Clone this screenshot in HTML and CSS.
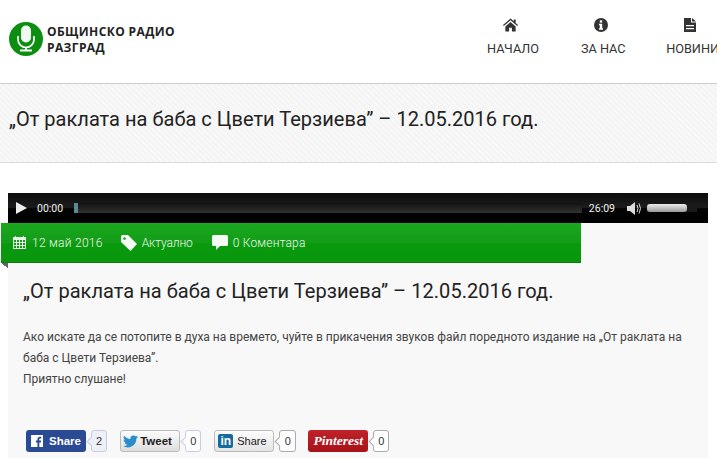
FILE: index.html
```html
<!DOCTYPE html>

<html>
    <head>
        <meta charset="UTF-8">
        <title>Общинско радио Разград</title>

        <link rel="stylesheet" href="styles.css">
    </head>

    <body>
        <header class="site-header">
            <div class="logo">
                <svg class="logo-icon" width="34" height="34" viewBox="0 0 34 34">
                    <circle cx="17" cy="17" r="17" fill="#0c8f10"/>
                    <rect x="12" y="3.500" width="10" height="17" rx="5" fill="#f2f8f2"/>
                    <path d="M9 14v3.500a8 8 0 0 0 16 0V14" fill="none" stroke="#fff" stroke-width="1.700"/>
                    <path d="M17 25.500v2.500M11 28.500h12" fill="none" stroke="#fff" stroke-width="1.800"/>
                </svg>
                <div class="logo-text">ОБЩИНСКО РАДИО<br>РАЗГРАД</div>
            </div>

            <nav class="menu">
                <a class="menu-item menu-home">
                    <svg width="15" height="14" viewBox="0 0 16 14"><path d="M8 0 0 7l.8 1L8 2l7.200 6 .8-1-2.500-2.200V1h-2v2L8 0zM2.500 8.500V14h4v-4h3v4h4V8.500L8 3.800z" fill="#333"/></svg>
                    <span>НАЧАЛО</span>
                </a>
                <a class="menu-item menu-about">
                    <svg width="14" height="14" viewBox="0 0 14 14"><circle cx="7" cy="7" r="7" fill="#333"/><rect x="5.800" y="2.300" width="2.400" height="2.300" fill="#fff"/><path d="M5 5.800h3.200v4.400H9v1.500H5v-1.500h.8V7.300H5z" fill="#fff"/></svg>
                    <span>ЗА НАС</span>
                </a>
                <a class="menu-item menu-news">
                    <svg width="12" height="14" viewBox="0 0 12 14"><path d="M0 0h7v4.500h5V14H0zM8 0l4 3.500H8zM2 7v1.300h8V7zM2 10v1.300h8V10z" fill="#333" fill-rule="evenodd"/></svg>
                    <span>НОВИНИ</span>
                </a>
            </nav>
        </header>

        <section class="title-band">
            <h1>„От раклата на баба с Цвети Терзиева” – 12.05.2016 год.</h1>
        </section>

        <main class="content">
            <div class="player">
                <svg class="play" width="11" height="12" viewBox="0 0 11 12"><path d="M0 0l11 6-11 6z" fill="#eee"/></svg>
                <span class="time">00:00</span>
                <div class="track"><div class="track-loaded"></div></div>
                <span class="time">26:09</span>
                <svg class="volume-icon" width="14" height="13" viewBox="0 0 14 13"><path d="M0 4h3l5-4v13l-5-4H0z" fill="#ddd"/><path d="M10 3q2 3.500 0 7M12 1.500q3 5 0 10" fill="none" stroke="#ddd"/></svg>
                <div class="volume"><div class="volume-level"></div></div>
            </div>

            <article class="post">
                <div class="ribbon">
                    <div class="meta meta-date">
                        <svg width="13" height="13" viewBox="0 0 13 13"><path d="M0 1h2V0h1v1h7V0h1v1h2v12H0zM1 4v2h2V4zM4 4v2h2V4zM7 4v2h2V4zM10 4v2h2V4zM1 7v2h2V7zM4 7v2h2V7zM7 7v2h2V7zM10 7v2h2V7zM1 10v2h2v-2zM4 10v2h2v-2zM7 10v2h2v-2zM10 10v2h2v-2z" fill="#e8f5e8" fill-rule="evenodd"/></svg>
                        <span>12 май 2016</span>
                    </div>
                    <div class="meta meta-cat">
                        <svg width="16" height="16" viewBox="0 0 16 16"><path d="M0 1.500A1.500 1.500 0 0 1 1.500 0H7l9 9-6.500 7L0 7zM3.500 2.200a1.300 1.300 0 1 0 .01 0z" fill="#f4fbf4" fill-rule="evenodd"/></svg>
                        <span>Актуално</span>
                    </div>
                    <div class="meta meta-comments">
                        <svg width="16" height="15" viewBox="0 0 16 15"><path d="M1.500 0h13A1.500 1.500 0 0 1 16 1.500v8a1.500 1.500 0 0 1-1.500 1.500H8l-4 4v-4H1.500A1.500 1.500 0 0 1 0 9.500v-8A1.500 1.500 0 0 1 1.500 0z" fill="#f4fbf4"/></svg>
                        <span>0 Коментара</span>
                    </div>
                </div>
                <div class="ribbon-fold"></div>

                <h2>„От раклата на баба с Цвети Терзиева” – 12.05.2016 год.</h2>

                <p class="post-text">Ако искате да се потопите в духа на времето, чуйте в прикачения звуков файл поредното издание на „От раклата на баба с Цвети Терзиева”.<br>Приятно слушане!</p>

                <div class="share">
                    <div class="share-item">
                        <a class="btn btn-fb">
                            <svg width="12" height="12" viewBox="0 0 13 13"><rect width="13" height="13" fill="#fff"/><path d="M9 13V8h1.700l.3-2H9V4.800c0-.6.200-1 1-1h1.100V2h-1.500C7.900 2 7 3 7 4.600V6H5.300v2H7v5z" fill="#2b4a94"/></svg>
                            Share
                        </a>
                        <span class="count count-fb">2</span>
                    </div>
                    <div class="share-item">
                        <a class="btn btn-tw">
                            <svg width="15" height="13" viewBox="0 0 16 13"><path d="M16 1.500c-.6.300-1.200.4-1.900.5.700-.4 1.200-1 1.400-1.800-.6.400-1.300.6-2 .8A3.300 3.300 0 0 0 7.900 3.800C5.200 3.700 2.800 2.400 1.100.4.300 1.900.7 3.800 2.100 4.700c-.5 0-1-.2-1.500-.4 0 1.600 1.100 2.900 2.600 3.300-.5.100-1 .1-1.500 0 .4 1.300 1.600 2.200 3.100 2.300A6.600 6.600 0 0 1 0 11.300 9.300 9.300 0 0 0 14.300 3.300c.7-.4 1.300-1 1.700-1.800z" fill="#2a8ccb"/></svg>
                            Tweet
                        </a>
                        <span class="count">0</span>
                    </div>
                    <div class="share-item">
                        <a class="btn btn-in">
                            <span class="in-box">in</span>
                            Share
                        </a>
                        <span class="count count-dark count-wide">0</span>
                    </div>
                    <div class="share-item share-pin">
                        <a class="btn btn-pin">Pinterest</a>
                        <span class="count count-dark">0</span>
                    </div>
                </div>
            </article>
        </main>
    </body>
</html>
```

FILE: styles.css
```css
* {
    margin: 0;
    padding: 0;
    box-sizing: border-box;
}

html, body {
    width: 100%;
    height: 100%;
    overflow: hidden;
}

body {
    font-family: "Roboto", "Liberation Sans", sans-serif;
    color: #333;
    background-color: #fff;
}

.site-header {
    height: 84px;
    display: flex;
    justify-content: space-between;
    border-bottom: 1px solid #ccc;
    overflow: hidden;
}

.logo {
    display: flex;
    align-items: center;
    gap: 4px;
    padding: 5px 0 11px 9px;
}

.logo-text {
    padding-top: 2px;
    font-family: "Open Sans", "Liberation Sans", sans-serif;
    font-weight: 700;
    font-size: 12px;
    line-height: 16px;
    letter-spacing: 0.4px;
    color: #222;
}

.menu {
    display: flex;
    flex-shrink: 0;
    width: 230px;
    padding-top: 18px;
}

.menu-item {
    display: flex;
    flex-direction: column;
    align-items: center;
    gap: 9px;
    font-size: 12.700px;
    line-height: 16px;
    color: #333;
    white-space: nowrap;
}

.menu-item svg {
    margin-right: 5px;
}

.menu-home {
    width: 52px;
}

.menu-about {
    width: 45px;
    margin-left: 42px;
}

.menu-news {
    width: 52px;
    margin-left: 41px;
}

.title-band {
    height: 79px;
    display: flex;
    align-items: center;
    padding: 0 9px 9px;
    background-color: #f6f6f6;
    background-image: repeating-linear-gradient(45deg, #f4f4f4 0, #f4f4f4 2px, #f8f8f8 2px, #f8f8f8 4px);
    border-bottom: 1px solid #ddd;
}

h1 {
    font-weight: 400;
    font-size: 20px;
    letter-spacing: 0.02px;
    color: #222;
    white-space: nowrap;
}

.content {
    padding: 30px 9px 0 8px;
}

.player {
    height: 30px;
    display: flex;
    align-items: center;
    padding: 0 11px 0 8px;
    background: linear-gradient(#0c0c0c, #1c1c1c 48%, #050505 52%, #000);
}

.play {
    margin-right: 10px;
}

.time {
    font-size: 10.500px;
    color: #f0f0f0;
}

.track {
    flex: 1;
    height: 10px;
    margin: 0 7px 0 11px;
    background: linear-gradient(#111, #333);
}

.track-loaded {
    width: 4px;
    height: 10px;
    background-color: #5c8a94;
}

.volume-icon {
    margin-left: 12px;
}

.volume {
    width: 50px;
    height: 8px;
    margin-left: 6px;
    background-color: #1a1a1a;
}

.volume-level {
    width: 40px;
    height: 8px;
    border-radius: 3px;
    background: linear-gradient(#eee, #999);
}

.post {
    height: 240px;
    padding: 0 15px;
    background-color: #f8f8f8;
}

.ribbon {
    width: 580px;
    height: 40px;
    display: flex;
    align-items: center;
    margin-left: -22px;
    padding-left: 12px;
    color: #eef8ee;
    font-size: 12px;
    font-weight: 300;
    background: linear-gradient(#1aa81e, #149c18 50%, #089a0c 55%, #0a960e);
    border-bottom: 1px solid #0b7d0e;
}

.meta {
    display: flex;
    align-items: center;
    gap: 6px;
    letter-spacing: 0.2px;
}

.meta-date {
    margin-right: 18px;
    letter-spacing: 0.27px;
}

.meta-cat {
    gap: 5px;
    margin-right: 19px;
    letter-spacing: -0.1px;
}

.meta-comments {
    gap: 5px;
}

.ribbon-fold {
    width: 7px;
    height: 5px;
    margin-left: -22px;
    background: linear-gradient(to top right, transparent 50%, #666 50%);
}

h2 {
    margin-top: 10px;
    font-weight: 400;
    font-size: 20px;
    line-height: 26px;
    letter-spacing: 0.04px;
    color: #222;
    white-space: nowrap;
}

.post-text {
    margin-top: 23px;
    font-size: 12px;
    line-height: 21px;
    color: #444;
}

.share {
    display: flex;
    align-items: center;
    gap: 13px;
    margin-top: 40px;
    padding-left: 3px;
}

.share-item {
    display: flex;
    align-items: center;
    gap: 5px;
}

.share-pin {
    margin-left: -1px;
}

.btn {
    width: 60px;
    height: 22px;
    display: flex;
    align-items: center;
    border-radius: 3px;
    font-family: "Liberation Sans", sans-serif;
    font-size: 11.500px;
    white-space: nowrap;
}

.btn svg {
    flex-shrink: 0;
}

.btn-fb {
    gap: 6px;
    padding-left: 5px;
    color: #fff;
    font-weight: 700;
    background-color: #2b4a94;
}

.btn-tw {
    gap: 2px;
    padding-left: 2px;
    color: #222;
    font-weight: 700;
    background: linear-gradient(#fdfdfd, #ddd);
    border: 1px solid #bbb;
}

.btn-in {
    gap: 4px;
    padding-left: 3px;
    font-size: 11px;
    color: #222;
    background: linear-gradient(#fdfdfd, #e4e4e4);
    border: 1px solid #bbb;
}

.in-box {
    flex-shrink: 0;
    width: 15px;
    height: 14px;
    border-radius: 2px;
    color: #fff;
    font-weight: 700;
    font-size: 12px;
    line-height: 14px;
    text-align: center;
    background-color: #146a9c;
}

.btn-pin {
    justify-content: center;
    color: #fff;
    font-family: "Liberation Serif", serif;
    font-style: italic;
    font-weight: 700;
    font-size: 13.500px;
    background: linear-gradient(#c0222a, #a81218);
}

.count {
    position: relative;
    min-width: 16px;
    height: 22px;
    padding: 0 4px;
    border: 1px solid #c8cce0;
    border-radius: 3px;
    font-family: "Liberation Sans", sans-serif;
    font-size: 11px;
    line-height: 20px;
    text-align: center;
    color: #333;
    background-color: #fff;
}

.count::before {
    content: "";
    position: absolute;
    left: -4px;
    top: 7px;
    width: 6px;
    height: 6px;
    background-color: #fff;
    border-left: 1px solid #c8cce0;
    border-bottom: 1px solid #c8cce0;
    transform: rotate(45deg);
}

.count-fb {
    background-color: #eef0f8;
}

.count-fb::before {
    background-color: #eef0f8;
}

.count-dark {
    border-color: #aaa;
}

.count-dark::before {
    border-color: #aaa;
}

.count-wide {
    min-width: 17px;
}
```
